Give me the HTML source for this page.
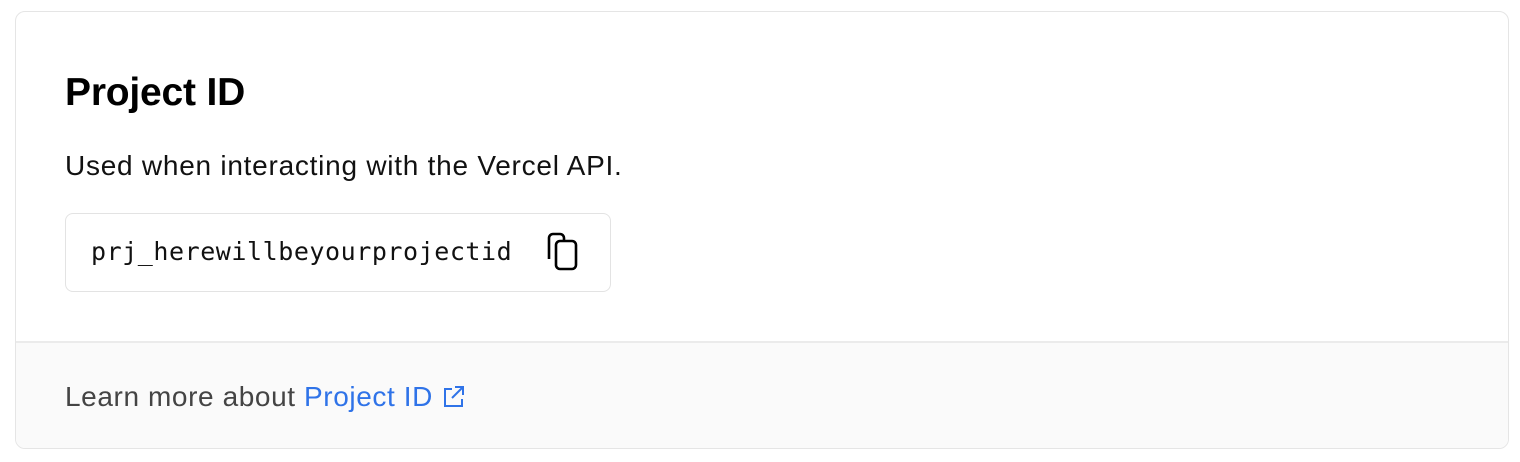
<!DOCTYPE html>
<html><head><style>
body{margin:0;background:#fff;width:1520px;height:462px;font-family:"Liberation Sans",sans-serif;position:relative;overflow:hidden}
.card{position:absolute;left:15px;top:11px;width:1492px;height:436px;border:1px solid #e5e5e5;border-radius:10px;overflow:hidden}
h1{position:absolute;left:49px;top:59px;margin:0;font-size:39px;font-weight:bold;color:#000;letter-spacing:-0.2px}
.desc{position:absolute;left:49px;top:138px;font-size:28px;letter-spacing:0.75px;color:#111}
.code{position:absolute;left:49px;top:201px;width:546px;height:79px;border:1px solid #e3e3e3;border-radius:8px;box-sizing:border-box}
.code span{position:absolute;left:25px;top:23px;font-family:"DejaVu Sans Mono","Liberation Mono",monospace;font-size:25px;letter-spacing:0.55px;color:#111}
.code svg{position:absolute;left:478px;top:17px}
.foot{position:absolute;left:0;top:329px;width:100%;height:107px;background:#fafafa;border-top:2px solid #ebebeb}
.foot p{position:absolute;left:49px;top:38px;margin:0;font-size:28px;letter-spacing:0.6px;color:#444}
.foot a{color:#2f73e8;text-decoration:none}
</style></head><body>
<div class="card">
<h1>Project ID</h1>
<div class="desc">Used when interacting with the Vercel API.</div>
<div class="code"><span>prj_herewillbeyourprojectid</span>
<svg width="40" height="42" viewBox="0 0 40 42" fill="none" stroke="#000" stroke-width="2.6" stroke-linejoin="round"><path d="M5 28V7a4 4 0 0 1 4-4h7a4 4 0 0 1 4 4v2"/><rect x="12" y="10" width="20" height="28" rx="4"/></svg></div>
<div class="foot"><p>Learn more about <a>Project ID <svg width="24" height="24" viewBox="0 0 24 24" fill="none" stroke="#2f73e8" stroke-width="2" style="vertical-align:-3px"><path d="M11 4H4v17h17v-7M14 2h8v8M22 2L11 13"/></svg></a></p></div>
</div>
</body></html>
